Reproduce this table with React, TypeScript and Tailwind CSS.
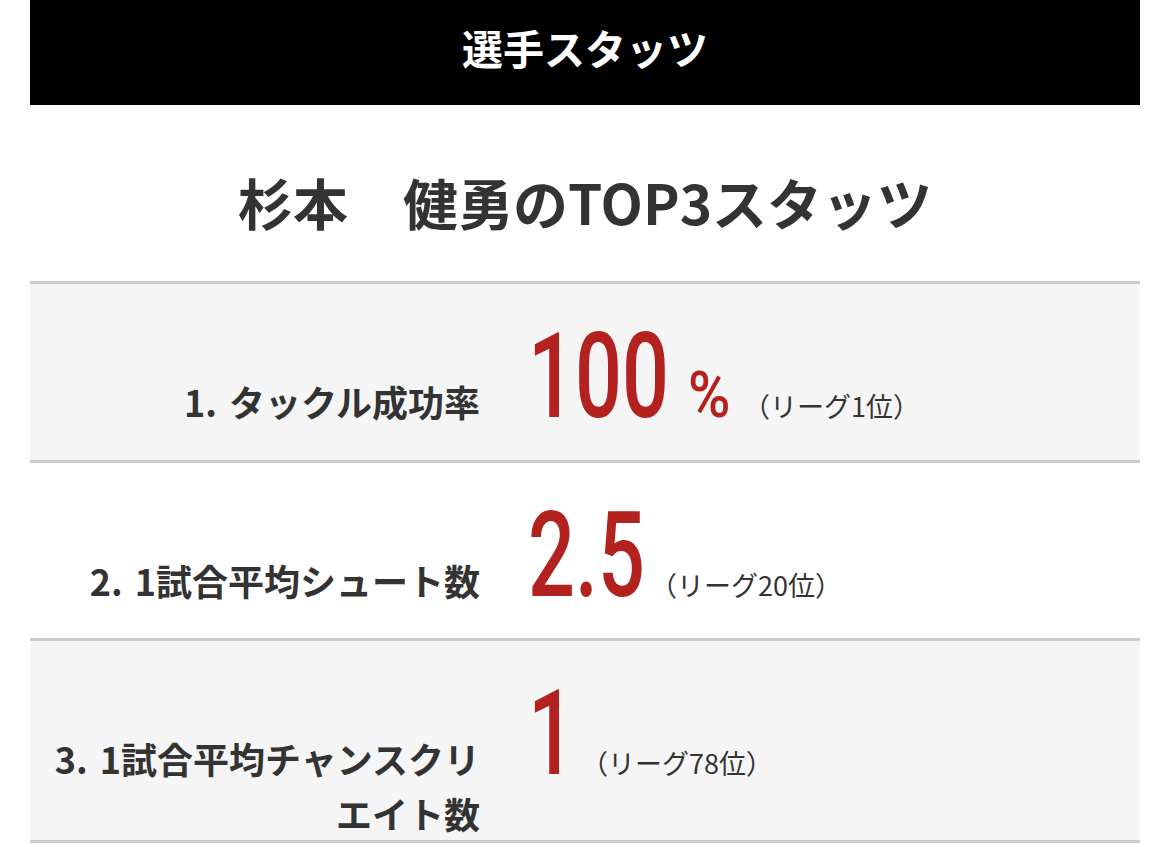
const stats = [
  {
    label: "1. タックル成功率",
    value: "100",
    unit: "%",
    rank: "（リーグ1位）",
    row: "h-[179px] bg-[#f5f5f5]",
    box: "w-[160px]",
  },
  {
    label: "2. 1試合平均シュート数",
    value: "2.5",
    unit: "",
    rank: "（リーグ20位）",
    row: "h-[178px] bg-white",
    box: "w-[122px]",
  },
  {
    label: "3. 1試合平均チャンスクリエイト数",
    value: "1",
    unit: "",
    rank: "（リーグ78位）",
    row: "h-[202px] bg-[#f5f5f5]",
    box: "w-[53px]",
  },
];

export default function App() {
  return (
    <main className="min-h-screen bg-white font-['Noto_Sans_CJK_JP',sans-serif] text-[#333]">
      <div className="mx-[30px]">
        {/* header bar */}
        <div className="flex h-[105px] items-center justify-center bg-black pb-[10px] text-[41px] font-bold text-white">
          選手スタッツ
        </div>

        <h2 className="mt-[66px] mb-[50px] text-center text-[55px] font-bold leading-[60px]">
          杉本　健勇のTOP3スタッツ
        </h2>

        <div className="border-t-[3px] border-[#ccc]">
          {stats.map((s) => (
            <div key={s.value} className={`flex items-baseline border-b-[3px] border-[#ccc] pt-[34px] ${s.row}`}>
              <div className="w-[450px] shrink-0 text-right text-[36px] font-bold leading-[55px] [word-spacing:4px]">
                {s.label}
              </div>
              <div className={`ml-[48px] inline-block shrink-0 whitespace-nowrap font-['Roboto',sans-serif] text-[118px] font-medium leading-none text-[#b3221f] ${s.box}`}>
                <span className="inline-block origin-left scale-x-[0.7]">{s.value}</span>
              </div>
              {s.unit && (
                <div className="inline-block w-[55px] shrink-0 whitespace-nowrap font-['Roboto',sans-serif] text-[64px] font-medium leading-none text-[#b3221f]">
                  <span className="inline-block origin-left scale-x-[0.9]">{s.unit}</span>
                </div>
              )}
              <div className="text-[27px] whitespace-nowrap">{s.rank}</div>
            </div>
          ))}
        </div>
      </div>
    </main>
  );
}
